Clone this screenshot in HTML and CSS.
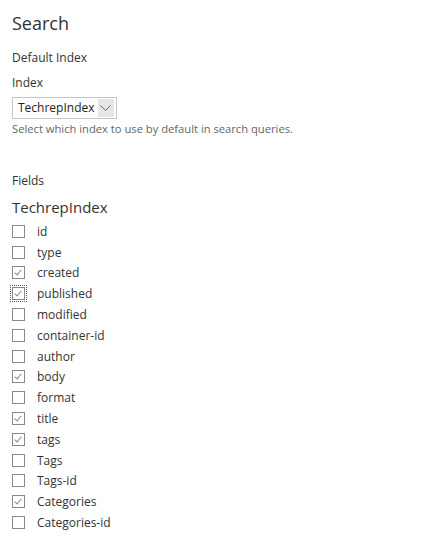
FILE: index.html
```html
<!DOCTYPE html>
<html>
<head>
<meta charset="utf-8">
<link rel="stylesheet" href="styles.css">
</head>
<body>
<div class="page">
  <h1 class="title">Search</h1>
  <div class="section-label">Default Index</div>
  <div class="field-label">Index</div>
  <div class="select">
    <span class="select-text">TechrepIndex</span>
    <span class="select-arrow"><svg width="11" height="7" viewBox="0 0 11 7"><path d="M0.5 0.5 L5.5 5.5 L10.5 0.5" fill="none" stroke="#666" stroke-width="1"/></svg></span>
  </div>
  <div class="help">Select which index to use by default in search queries.</div>
  <div class="fields-label">Fields</div>
  <div class="index-name">TechrepIndex</div>
  <ul class="list">
    <li class="row"><span class="cb"></span><span>id</span></li>
    <li class="row"><span class="cb"></span><span>type</span></li>
    <li class="row"><span class="cb checked"></span><span>created</span></li>
    <li class="row"><span class="cb checked focus"></span><span>published</span></li>
    <li class="row"><span class="cb"></span><span>modified</span></li>
    <li class="row"><span class="cb"></span><span>container-id</span></li>
    <li class="row"><span class="cb"></span><span>author</span></li>
    <li class="row"><span class="cb checked"></span><span>body</span></li>
    <li class="row"><span class="cb"></span><span>format</span></li>
    <li class="row"><span class="cb checked"></span><span>title</span></li>
    <li class="row"><span class="cb checked"></span><span>tags</span></li>
    <li class="row"><span class="cb"></span><span>Tags</span></li>
    <li class="row"><span class="cb"></span><span>Tags-id</span></li>
    <li class="row"><span class="cb checked"></span><span>Categories</span></li>
    <li class="row"><span class="cb"></span><span>Categories-id</span></li>
  </ul>
</div>
</body>
</html>
```
FILE: styles.css
```css
html, body { margin: 0; padding: 0; background: #fff; }
body { font-family: "Open Sans", "Noto Sans", sans-serif; color: #333; }
.page { padding: 10px 12px; }
.title { margin: 0; font-size: 18px; font-weight: 400; line-height: 26px; color: #333; }
.section-label { margin-top: 14px; font-size: 12px; line-height: 16px; }
.field-label { margin-top: 9px; font-size: 12px; line-height: 16px; }
.select { margin-top: 6px; display: inline-flex; align-items: center; border: 1px solid #c6c6c6; height: 22px; box-sizing: border-box; padding: 0 2px 0 5px; gap: 3px; }
.select-text { font-size: 12px; line-height: 16px; color: #222; }
.select-arrow { width: 16px; height: 18px; background: #e6e6e6; display: flex; align-items: center; justify-content: center; }
.help { margin-top: 2px; font-size: 11.2px; line-height: 16px; color: #666; }
.fields-label { margin-top: 36px; font-size: 12px; line-height: 16px; }
.index-name { margin-top: 8px; font-size: 15px; line-height: 20px; }
.list { list-style: none; margin: 4px 0 0; padding: 0; }
.row { display: flex; align-items: center; height: 20.8px; font-size: 12px; gap: 12px; }
.cb { width: 13px; height: 13px; box-sizing: border-box; border: 1px solid #888; position: relative; flex: none; }
.cb.checked::after { content: ""; position: absolute; left: 3px; top: 1px; width: 3px; height: 6px; border: solid #888; border-width: 0 1px 1px 0; transform: rotate(40deg); }
.cb.focus { outline: 1px dotted #555; outline-offset: 1px; }
```
